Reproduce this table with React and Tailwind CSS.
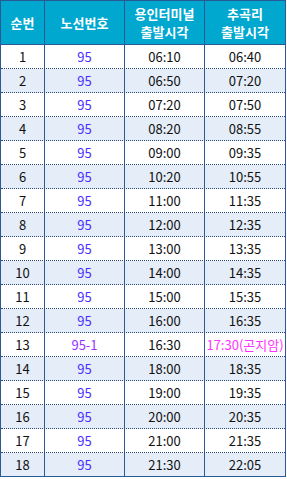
import React from "react";

const rows = [
  ["1", "95", "06:10", "06:40"],
  ["2", "95", "06:50", "07:20"],
  ["3", "95", "07:20", "07:50"],
  ["4", "95", "08:20", "08:55"],
  ["5", "95", "09:00", "09:35"],
  ["6", "95", "10:20", "10:55"],
  ["7", "95", "11:00", "11:35"],
  ["8", "95", "12:00", "12:35"],
  ["9", "95", "13:00", "13:35"],
  ["10", "95", "14:00", "14:35"],
  ["11", "95", "15:00", "15:35"],
  ["12", "95", "16:00", "16:35"],
  ["13", "95-1", "16:30", "17:30(곤지암)"],
  ["14", "95", "18:00", "18:35"],
  ["15", "95", "19:00", "19:35"],
  ["16", "95", "20:00", "20:35"],
  ["17", "95", "21:00", "21:35"],
  ["18", "95", "21:30", "22:05"],
];

export default function App() {
  return (
    <div
      className="w-[287px] h-[479px] bg-white"
      style={{ fontFamily: "'Noto Sans CJK KR', 'Noto Sans', sans-serif" }}
    >
      <div className="w-[286px] border border-[#2b5996] text-[13px]">
        <div className="flex h-[44px] bg-[#00a8d0] border-b border-[#2b5996] text-white font-bold leading-[18px]">
          <div className="w-[43px] flex items-center justify-center">순번</div>
          <div className="w-[80px] border-l border-[#2b5996] flex items-center justify-center">노선번호</div>
          <div className="w-[80px] border-l border-[#2b5996] flex flex-col items-center justify-center text-center">
            <span className="block h-[18px]">용인터미널</span>
            <span className="block h-[18px]">출발시각</span>
          </div>
          <div className="w-[81px] border-l border-[#2b5996] flex flex-col items-center justify-center text-center">
            <span className="block h-[18px]">추곡리</span>
            <span className="block h-[18px]">출발시각</span>
          </div>
        </div>
        {rows.map((r, i) => {
          const last = i === rows.length - 1;
          const even = i % 2 === 1;
          const special = r[1] === "95-1";
          return (
            <div
              key={i}
              className={
                "flex text-[#111] " +
                (even ? "bg-[#e4edf8] " : "bg-white ") +
                (last ? "h-[23px]" : "h-[24px] border-b border-dotted border-[#2b4a78]")
              }
            >
              <div className="w-[43px] flex items-center justify-center">{r[0]}</div>
              <div
                className={
                  "w-[80px] border-l border-[#2b5996] flex items-center justify-center " +
                  (special ? "text-[#9933ff]" : "text-[#4a30ff]")
                }
              >
                {r[1]}
              </div>
              <div className="w-[80px] border-l border-[#2b5996] flex items-center justify-center">{r[2]}</div>
              <div
                className={
                  "w-[81px] border-l border-[#2b5996] flex items-center justify-center " +
                  (special ? "text-[#ff33ff]" : "")
                }
              >
                {r[3]}
              </div>
            </div>
          );
        })}
      </div>
    </div>
  );
}
